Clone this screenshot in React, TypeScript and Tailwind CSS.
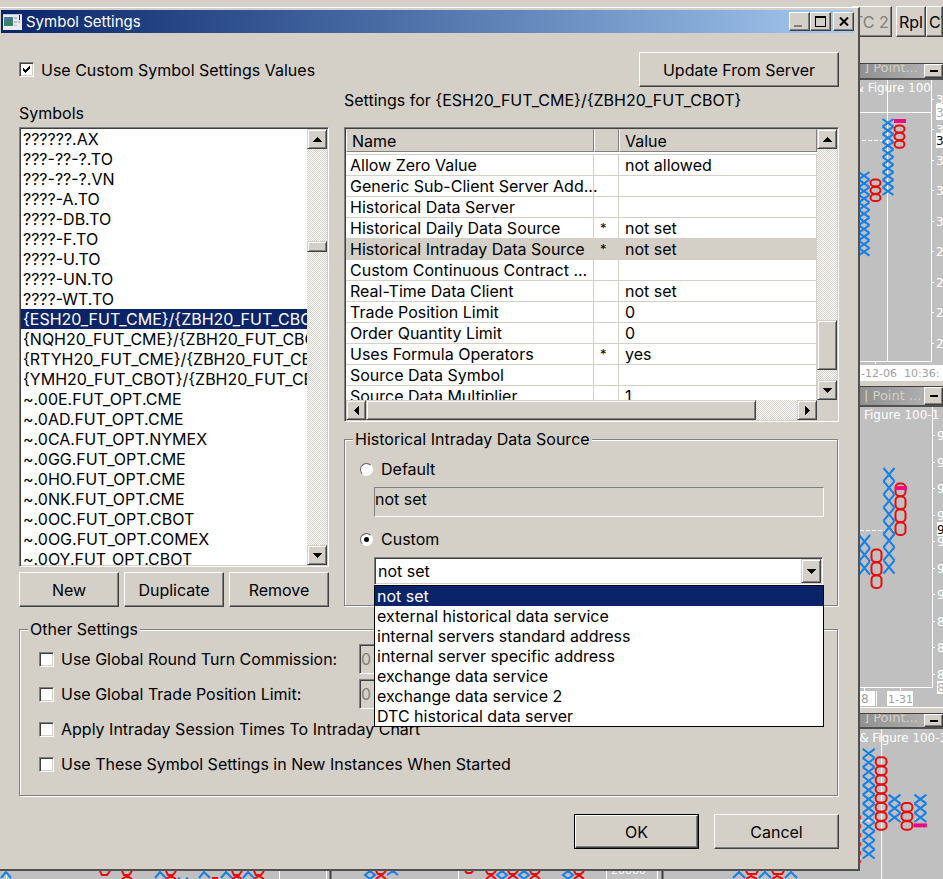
import { useState } from 'react';
import type { ReactNode } from 'react';

const symbols = [
  '??????.AX',
  '???-??-?.TO',
  '???-??-?.VN',
  '????-A.TO',
  '????-DB.TO',
  '????-F.TO',
  '????-U.TO',
  '????-UN.TO',
  '????-WT.TO',
  '{ESH20_FUT_CME}/{ZBH20_FUT_CBOT}',
  '{NQH20_FUT_CME}/{ZBH20_FUT_CBOT}',
  '{RTYH20_FUT_CME}/{ZBH20_FUT_CBOT}',
  '{YMH20_FUT_CBOT}/{ZBH20_FUT_CBOT}',
  '~.00E.FUT_OPT.CME',
  '~.0AD.FUT_OPT.CME',
  '~.0CA.FUT_OPT.NYMEX',
  '~.0GG.FUT_OPT.CME',
  '~.0HO.FUT_OPT.CME',
  '~.0NK.FUT_OPT.CME',
  '~.0OC.FUT_OPT.CBOT',
  '~.0OG.FUT_OPT.COMEX',
  '~.0OY.FUT_OPT.CBOT',
];

const settings = [
  { name: 'Allow Zero Value', mark: '', value: 'not allowed' },
  { name: 'Generic Sub-Client Server Add...', mark: '', value: '' },
  { name: 'Historical Data Server', mark: '', value: '' },
  { name: 'Historical Daily Data Source', mark: '*', value: 'not set' },
  { name: 'Historical Intraday Data Source', mark: '*', value: 'not set' },
  { name: 'Custom Continuous Contract ...', mark: '', value: '' },
  { name: 'Real-Time Data Client', mark: '', value: 'not set' },
  { name: 'Trade Position Limit', mark: '', value: '0' },
  { name: 'Order Quantity Limit', mark: '', value: '0' },
  { name: 'Uses Formula Operators', mark: '*', value: 'yes' },
  { name: 'Source Data Symbol', mark: '', value: '' },
  { name: 'Source Data Multiplier', mark: '', value: '1' },
];

const sources = [
  'not set',
  'external historical data service',
  'internal servers standard address',
  'internal server specific address',
  'exchange data service',
  'exchange data service 2',
  'DTC historical data server',
];

const raised =
  'border border-t-white border-l-white border-r-[#404040] border-b-[#404040] bg-[#d4d0c8] shadow-[inset_-1px_-1px_0_#808080]';
const sunken =
  'border border-t-[#808080] border-l-[#808080] border-r-white border-b-white p-px shadow-[inset_1px_1px_0_#404040,inset_-1px_-1px_0_#d4d0c8]';
const scrollPiece =
  'border border-t-[#d4d0c8] border-l-[#d4d0c8] border-r-[#404040] border-b-[#404040] bg-[#d4d0c8] shadow-[inset_1px_1px_0_#fff,inset_-1px_-1px_0_#808080]';
const track = 'bg-[conic-gradient(#fff_25%,#d4d0c8_0_50%,#fff_0_75%,#d4d0c8_0)] bg-[length:2px_2px]';

const arrows = {
  up: 'M0 5h9v-1h-1v-1h-1v-1h-1v-1h-1v-1h-1v1h-1v1h-1v1h-1v1h-1z',
  down: 'M0 0h9v1h-1v1h-1v1h-1v1h-1v1h-1v-1h-1v-1h-1v-1h-1v-1h-1z',
  left: 'M5 0v9h-1v-1h-1v-1h-1v-1h-1v-1h-1v-1h1v-1h1v-1h1v-1h1v-1z',
  right: 'M0 0v9h1v-1h1v-1h1v-1h1v-1h1v-1h-1v-1h-1v-1h-1v-1h-1v-1z',
};

const Arrow = ({ dir }: { dir: keyof typeof arrows }) => {
  const flat = dir === 'up' || dir === 'down';
  return (
    <svg width={flat ? 9 : 5} height={flat ? 5 : 9} shapeRendering="crispEdges" aria-hidden="true">
      <path d={arrows[dir]} />
    </svg>
  );
};

const ScrollButton = ({ dir }: { dir: keyof typeof arrows }) => (
  <button type="button" aria-label={`Scroll ${dir}`} className={`flex size-5 shrink-0 items-center justify-center ${scrollPiece}`}>
    <Arrow dir={dir} />
  </button>
);

const PushButton = ({ children, className = '' }: { children: ReactNode; className?: string }) => (
  <button type="button" className={`h-[35px] ${raised} ${className}`}>
    {children}
  </button>
);

const CheckBox = ({ label, checked = false }: { label: string; checked?: boolean }) => (
  <label className="flex items-center gap-[7px] whitespace-nowrap">
    <span className="relative flex size-[15px] shrink-0">
      <input type="checkbox" defaultChecked={checked} className={`peer size-full appearance-none bg-white ${sunken}`} />
      <svg
        className="pointer-events-none absolute top-1 left-1 hidden peer-checked:block"
        width="7"
        height="7"
        shapeRendering="crispEdges"
        aria-hidden="true"
      >
        <path d="M0 2h1v1h1v1h1v-1h1v-1h1v-1h1v-1h1v3h-1v1h-1v1h-1v1h-1v1h-1v-1h-1v-1h-1z" />
      </svg>
    </span>
    {label}
  </label>
);

const Radio = ({ label, checked = false }: { label: string; checked?: boolean }) => (
  <label className="flex h-5 items-center gap-2">
    <span className="relative flex size-[13px] shrink-0">
      <input
        type="radio"
        name="source"
        defaultChecked={checked}
        className="peer size-full appearance-none rounded-full border border-t-[#606060] border-l-[#606060] border-r-white border-b-white bg-white"
      />
      <span className="pointer-events-none absolute top-1 left-1 hidden size-[5px] rounded-full bg-black peer-checked:block" />
    </span>
    {label}
  </label>
);

const Group = ({ title, children, className = '' }: { title: string; children: ReactNode; className?: string }) => (
  <fieldset
    className={`mr-px min-w-0 border border-[#808080] shadow-[1px_1px_0_#fff,inset_1px_1px_0_#fff] ${className}`}
  >
    <legend className="ml-2 h-5 bg-[#d4d0c8] px-[2px]">{title}</legend>
    {children}
  </fieldset>
);

/* ---- Point & figure charts behind the dialog ---- */

interface ColumnProps {
  x: number;
  y: number;
  count: number;
  step: number;
  w?: number;
}

const Xs = ({ x, y, count, step, w = 11 }: ColumnProps) => (
  <path
    d={Array.from({ length: count }, (_, i) => {
      const top = y + i * step;
      return `M${x - w / 2} ${top}L${x + w / 2} ${top + step}M${x + w / 2} ${top}L${x - w / 2} ${top + step}`;
    }).join('')}
    stroke="#1480e8"
    strokeWidth="2.1"
    fill="none"
  />
);

const Os = ({ x, y, count, step, w = 10 }: ColumnProps) => (
  <g stroke="#e80c0c" strokeWidth="2" fill="none">
    {Array.from({ length: count }, (_, i) => (
      <rect key={i} x={x - w / 2} y={y + i * step + 0.5} width={w} height={step - 0.6} rx="4" />
    ))}
  </g>
);

const Scale = ({ x, ticks }: { x: number; ticks: [number, string][] }) => (
  <g>
    {ticks.map(([y, label]) => (
      <g key={y}>
        <path d={`M${x} ${y + 0.5}h3`} stroke="#fff" />
        <text x={x + 5} y={y + 5} fill="#fff">
          {label}
        </text>
      </g>
    ))}
  </g>
);

const chartText = "font-['DejaVu_Sans',sans-serif] text-[12px]";

const ChartWindow = ({ title, bar, children, className }: { title: string; bar: string; children: ReactNode; className: string }) => (
  <section className={`flex flex-col overflow-hidden border-t border-[#404040] bg-[#c0c0c0] ${className}`}>
    <div className={`flex shrink-0 justify-between overflow-hidden border-b-2 border-[#505050] bg-linear-to-r from-[#909090] to-[#b8b8b8] ${bar}`}>
      <span className="pl-1 font-['DejaVu_Sans',sans-serif] text-[13px] whitespace-pre text-[#d4d0c8]">{title}</span>
      <button type="button" aria-label="Minimize" className={`flex h-full w-[19px] shrink-0 items-center justify-center ${raised}`}>
        <span className="h-[2px] w-2 bg-black" />
      </button>
    </div>
    {children}
  </section>
);

const Backdrop = () => (
  <div className="absolute inset-0 flex flex-col overflow-hidden bg-[#d4d0c8]">
    <div className="flex h-[63px] shrink-0 justify-end pt-[6px]">
      <div className="flex h-[31px] text-[16px]">
        <button type="button" className={`mr-1 w-10 pr-[3px] text-right whitespace-nowrap text-[#808080] ${raised}`}>TC 2</button>
        <button type="button" className={`w-[30px] ${raised}`}>Rpl</button>
        <button type="button" className={`w-[17px] overflow-hidden pl-[2px] text-left ${raised}`}>CV</button>
      </div>
    </div>
    <div className="flex min-h-0 flex-1">
      <div className="flex flex-1 flex-col justify-end">
        <svg className="h-2 w-full bg-[#c0c0c0]" aria-hidden="true">
          <path d="M6.5 0v8M279.5 0v8M326.5 0v8M458.5 0v8M606.5 0v8M657.5 0v8" stroke="#fff" />
          <path d="M330.5 0v8M662.5 0v8" stroke="#404040" strokeWidth="2" />
          <g stroke="#1480e8" strokeWidth="2" fill="none">
            <path d="M1 7l5-6l5 6M155 7l5-6l6 6M199 7l5-6l6 6M221 7l5-6l6 6M243 7l5-6l6 6M387 4l6-4l5 4M178 7l2 1M186 8l2-1" />
            <path d="M365 4l5-4l5 4l-5 4zM497 4l5-4l5 4l-5 4zM519 4l5-4l5 4l-5 4zM563 4l5-4l5 4l-5 4z" />
            <path d="M733 7l6-6l6 6M759 7l6-6l6 6M785 7l6-6l6 6" />
          </g>
          <g stroke="#e80c0c" strokeWidth="2" fill="none">
            <path d="M100 0l2 4h5l3-4M122 0l2 4h5l3-4M122 8l5-3l5 3M166 0l2 4h5l3-4M166 8l5-3l5 3M232 0l2 4h5l3-4M232 8l5-3l5 3M254 0l2 4h5l3-4M254 8l5-3l5 3M212 7h6" />
            <path d="M376 0l2 3h5l3-3M376 8l5-4l5 4M465 0l2 2h4l2-2M486 0l2 3h5l3-3M486 8l5-4l5 4M508 0l2 3h5l3-3M508 8l5-4l5 4M530 0l2 3h5l3-3M530 8l5-4l5 4M574 0l2 3h5l3-3M574 8l5-4l5 4" />
            <path d="M746 0l2 3h8l2-3M746 8l5-3l6 3M772 0l2 3h8l2-3M772 8l5-3l6 3" />
          </g>
          <text x="611" y="3" fill="#fff" className="font-['DejaVu_Sans',sans-serif] text-[11px]">20000</text>
        </svg>
      </div>
      {/* the drawings below use window coordinates, offset by their viewBox */}
      <div className="flex w-[83px] shrink-0 flex-col">
        <ChartWindow title="] Point..." bar="h-4 items-start leading-2" className="h-[317px]">
          <svg width="83" height="300" viewBox="860 80 83 300" className={chartText} role="img" aria-label="Point and figure chart">
            <path d="M860 112.5h71M887.5 80v281M931.5 80v281M860 361.5h72M875.5 361v3" stroke="#fff" fill="none" />
            <path d="M862 140.5h34" stroke="#fff" strokeDasharray="4 2" />
            <text x="931" y="92" textAnchor="end" fill="#fff">& Figure 100</text>
            <Xs x={864} y={172} count={11} step={7.6} />
            <Os x={875.5} y={179} count={3} step={7.4} />
            <Xs x={888} y={119} count={10} step={7.6} />
            <Os x={899.5} y={125} count={3} step={7.6} />
            <path d="M894 119h12v4h-12z" fill="#f00c80" />
            <Scale x={931} ticks={[[99, '3'], [129, '3'], [160, '3'], [190, '3'], [221, '3'], [251, '2'], [282, '2'], [312, '2'], [343, '2']]} />
            <path d="M936 104h7v16h-7zM936 133h7v15h-7zM860 365h83v15h-83z" fill="#fff" />
            <text x="936" y="117" fill="#b0b0b0">3</text>
            <text x="936" y="145">3</text>
            <text x="861" y="377" fill="#a0a0a0" className="text-[11px]" xmlSpace="preserve">-12-06  10:36:</text>
          </svg>
        </ChartWindow>
        <div className="h-[6px] shrink-0 border-t border-white bg-[#d4d0c8]" />
        <ChartWindow title="| Point ..." bar="h-5 items-center" className="h-[321px]">
          <svg width="83" height="300" viewBox="860 407 83 300" className={chartText} role="img" aria-label="Point and figure chart">
            <path d="M932.5 407v281M860 687.5h73M864.5 688v3M900.5 688v3" stroke="#fff" fill="none" />
            <path d="M860 530.5h34" stroke="#fff" strokeDasharray="4 2" />
            <text x="864" y="419" fill="#fff">Figure 100-1</text>
            <Xs x={864.5} y={535} count={3} step={13.2} />
            <Os x={876.5} y={549} count={3} step={13} />
            <Xs x={889} y={468} count={8} step={13.2} />
            <Os x={900.5} y={483} count={4} step={13} />
            <path d="M895 486h12v4h-12z" fill="#f00c80" />
            <Scale x={932} ticks={[[435, '9'], [462, '9'], [488, '9'], [515, '9'], [541, '9'], [568, '9'], [594, '9'], [621, '8'], [647, '8'], [674, '8']]} />
            <path d="M937 522h6v14h-6zM937 681h6v13h-6zM860 691h15v15h-15zM876 691h1v15h-1zM887 691h26v15h-26z" fill="#fff" />
            <text x="937" y="534">9</text>
            <text x="937" y="692" fill="#b0b0b0">8</text>
            <text x="861" y="703" fill="#a0a0a0">8</text>
            <text x="888" y="703" fill="#a0a0a0" className="text-[11px]">1-31</text>
          </svg>
        </ChartWindow>
        <div className="h-[6px] shrink-0 border-t border-white bg-[#d4d0c8]" />
        <ChartWindow title="] Point..." bar="h-[15px] items-start leading-2" className="flex-1">
          <svg width="83" height="151" viewBox="860 728 83 151" className={chartText} role="img" aria-label="Point and figure chart">
            <path d="M881.5 728v151" stroke="#fff" />
            <path d="M860 820.5h26" stroke="#fff" strokeDasharray="4 2" />
            <path d="M860.5 815v48" stroke="#e80c0c" strokeDasharray="4 5" />
            <text x="859" y="741" fill="#fff">& Figure 100-3</text>
            <Xs x={868.5} y={748} count={12} step={9.2} w={12} />
            <Os x={881} y={756} count={8} step={9.2} w={11} />
            <Xs x={894.5} y={794} count={3} step={9.2} w={12} />
            <Os x={907} y={802} count={3} step={9.2} w={11} />
            <Xs x={920.5} y={794} count={3} step={9.2} w={12} />
            <path d="M914 823h13v4h-13z" fill="#e80c80" />
          </svg>
        </ChartWindow>
      </div>
    </div>
  </div>
);

/* ---- Dialog parts ---- */

const TitleBar = () => (
  <header className="flex h-[23px] items-center bg-linear-to-r from-[#0a246a] to-[#a6caf0] pl-[2px] text-white">
    <svg width="19" height="16" shapeRendering="crispEdges" aria-hidden="true">
      <path d="M0 0h19v16h-19z" fill="#e8ecf0" />
      <path d="M0 0h19v1h-19z" fill="#b8c8dc" />
      <path d="M1 3h9v9h-9z" fill="#3c8070" />
      <path d="M1 3h9v2h-6v2h-3z" fill="#4878a8" />
      <path d="M11 3h3v2h-3zM11 7h3v2h-3zM11 11h3v1h-3zM15 7h2v2h-2z" fill="#b8bcc4" />
      <path d="M16 1h1v5h-1z" fill="#203040" />
    </svg>
    <h1 className="ml-1 flex-1 text-[15px]">Symbol Settings</h1>
    <button type="button" aria-label="Minimize" className={`flex h-[19px] w-[21px] items-end pb-[3px] pl-1 ${raised}`}>
      <span className="h-[2px] w-2 bg-[#808080]" />
    </button>
    <button type="button" aria-label="Maximize" className={`flex h-[19px] w-[21px] items-center justify-center ${raised}`}>
      <span className="h-[11px] w-[11px] border border-t-2 border-black" />
    </button>
    <button type="button" aria-label="Close" className={`ml-[2px] flex h-[19px] w-[21px] items-center justify-center ${raised}`}>
      <svg width="10" height="9" aria-hidden="true">
        <path d="M1 0.5l8 8M9 0.5l-8 8" stroke="#000" strokeWidth="2" />
      </svg>
    </button>
  </header>
);

const SymbolList = () => {
  const [selected, setSelected] = useState(9);
  return (
    <div className={`flex h-[440px] bg-white ${sunken}`}>
      <ul role="listbox" aria-label="Symbols" className="min-w-0 flex-1 overflow-hidden">
        {symbols.map((s, i) => (
          <li
            key={s}
            role="option"
            aria-selected={i === selected}
            onClick={() => setSelected(i)}
            className={`h-5 pl-[2px] leading-5 whitespace-nowrap ${i === selected ? 'bg-[#0a246a] text-white' : ''}`}
          >
            {s}
          </li>
        ))}
      </ul>
      <div className={`flex w-5 shrink-0 flex-col ${track}`}>
        <ScrollButton dir="up" />
        <div className={`mt-[92px] h-[11px] ${scrollPiece}`} />
        <div className="flex-1" />
        <ScrollButton dir="down" />
      </div>
    </div>
  );
};

const SettingsTable = () => {
  const [selected, setSelected] = useState(4);
  const th = 'h-[23px] border border-t-[#d4d0c8] border-l-white border-r-[#808080] border-b-[#808080] bg-[#d4d0c8] text-left font-normal';
  const td = 'h-[21px] border-r border-b border-[#d4d0c8] p-0 whitespace-nowrap';
  return (
    <div className={`flex h-[295px] flex-col bg-[#d4d0c8] ${sunken}`}>
      <div className="flex min-h-0 flex-1">
        <div className="min-w-0 flex-1 overflow-hidden bg-white">
          <table className="w-full table-fixed border-separate border-spacing-0 leading-5">
            <thead>
              <tr>
                <th className={`w-[248px] pl-[5px] ${th}`}>Name</th>
                <th className={`w-[25px] ${th}`} aria-label="Changed" />
                <th className={`pl-[5px] ${th}`}>Value</th>
              </tr>
            </thead>
            <tbody>
              <tr aria-hidden="true">
                <td colSpan={3} className="h-[3px] border-b border-[#d4d0c8] p-0" />
              </tr>
              {settings.map((row, i) => (
                <tr key={row.name} onClick={() => setSelected(i)} className={i === selected ? 'bg-[#d4d0c8]' : ''}>
                  <td className={`pl-1 ${td}`}>{row.name}</td>
                  <td className={`pl-[6px] text-[13px] ${td}`}>{row.mark}</td>
                  <td className={`pl-[6px] ${td}`}>{row.value}</td>
                </tr>
              ))}
            </tbody>
          </table>
        </div>
        <div className={`flex w-5 shrink-0 flex-col ${track}`}>
          <ScrollButton dir="up" />
          <div className="flex-1" />
          <div className={`mb-[10px] h-[50px] ${scrollPiece}`} />
          <ScrollButton dir="down" />
        </div>
      </div>
      <div className={`mr-5 flex h-5 shrink-0 ${track}`}>
        <ScrollButton dir="left" />
        <div className={`mr-[41px] flex-1 ${scrollPiece}`} />
        <ScrollButton dir="right" />
      </div>
    </div>
  );
};

const SourcePicker = () => {
  const [value, setValue] = useState('not set');
  return (
    <div className="relative">
      <div className={`mr-px flex h-[28px] bg-white ${sunken}`}>
        <select
          aria-label="Custom source"
          value={value}
          onChange={(e) => setValue(e.target.value)}
          className="min-w-0 flex-1 appearance-none bg-white pl-[2px]"
        >
          {sources.map((s) => (
            <option key={s}>{s}</option>
          ))}
        </select>
        <span className={`pointer-events-none flex w-5 items-center justify-center ${scrollPiece}`}>
          <Arrow dir="down" />
        </span>
      </div>
      <ul role="listbox" aria-label="Sources" className="absolute top-full right-0 left-0 z-10 border border-black bg-white">
        {sources.map((s) => (
          <li
            key={s}
            role="option"
            aria-selected={s === value}
            onClick={() => setValue(s)}
            className={`h-5 pl-[2px] leading-5 ${s === value ? 'bg-[#0a246a] text-white' : ''}`}
          >
            {s}
          </li>
        ))}
      </ul>
    </div>
  );
};

export default function App() {
  return (
    <div className="relative min-h-screen overflow-hidden pt-[7px] pb-2 font-['Inter',sans-serif] text-[16px] leading-5 text-black">
      <Backdrop />
      <main className="relative mr-[83px] border-t border-r-2 border-b-2 border-t-white border-r-[#505050] border-b-[#505050] bg-[#d4d0c8] pt-[2px]">
        <div className="mr-1 ml-px">
          <TitleBar />
        </div>
        <form className="px-[19px] pt-[19px] pb-5" onSubmit={(e) => e.preventDefault()}>
          <div className="flex gap-[15px]">
            <div className="w-[310px] shrink-0">
              <div className="flex h-[35px] items-center">
                <CheckBox label="Use Custom Symbol Settings Values" checked />
              </div>
              <h2 className="mt-4 mb-1">Symbols</h2>
              <SymbolList />
              <div className="mt-[5px] flex gap-[5px]">
                <PushButton className="flex-1">New</PushButton>
                <PushButton className="flex-1">Duplicate</PushButton>
                <PushButton className="flex-1">Remove</PushButton>
              </div>
            </div>
            <div className="flex min-w-0 flex-1 flex-col">
              <PushButton className="w-[200px] self-end">Update From Server</PushButton>
              <h2 className="mt-[3px] mb-[17px] whitespace-nowrap">{'Settings for {ESH20_FUT_CME}/{ZBH20_FUT_CBOT}'}</h2>
              <SettingsTable />
              <Group title="Historical Intraday Data Source" className="mt-[7px] mb-px flex-1">
                <div className="pt-[10px] pr-[13px] pl-[15px]">
                  <Radio label="Default" />
                  <input
                    readOnly
                    aria-label="Default source"
                    value="not set"
                    className="mt-2 ml-[14px] block h-[30px] w-[calc(100%-14px)] border border-t-[#808080] border-l-[#808080] border-r-white border-b-white bg-[#d4d0c8] pb-[6px]"
                  />
                  <div className="mt-3 mb-2">
                    <Radio label="Custom" checked />
                  </div>
                  <div className="ml-[14px]">
                    <SourcePicker />
                  </div>
                </div>
              </Group>
            </div>
          </div>
          <Group title="Other Settings" className="mt-3">
            <div className="flex flex-col gap-[15px] pt-[10px] pb-[21px] pl-[19px]">
              <div className="flex h-5 items-center">
                <div className="w-[320px]">
                  <CheckBox label="Use Global Round Turn Commission:" />
                </div>
                <input disabled aria-label="Commission" value="0" className={`h-[30px] w-[100px] text-[#808080] ${sunken}`} />
              </div>
              <div className="flex h-5 items-center">
                <div className="w-[320px]">
                  <CheckBox label="Use Global Trade Position Limit:" />
                </div>
                <input disabled aria-label="Position limit" value="0" className={`h-[30px] w-[100px] text-[#808080] ${sunken}`} />
              </div>
              <CheckBox label="Apply Intraday Session Times To Intraday Chart" />
              <CheckBox label="Use These Symbol Settings in New Instances When Started" />
            </div>
          </Group>
          <div className="mt-[18px] flex justify-end gap-[15px]">
            <button type="submit" className="border border-black">
              <span className={`flex h-[33px] w-[123px] items-center justify-center ${raised}`}>OK</span>
            </button>
            <PushButton className="w-[125px]">Cancel</PushButton>
          </div>
        </form>
      </main>
    </div>
  );
}
